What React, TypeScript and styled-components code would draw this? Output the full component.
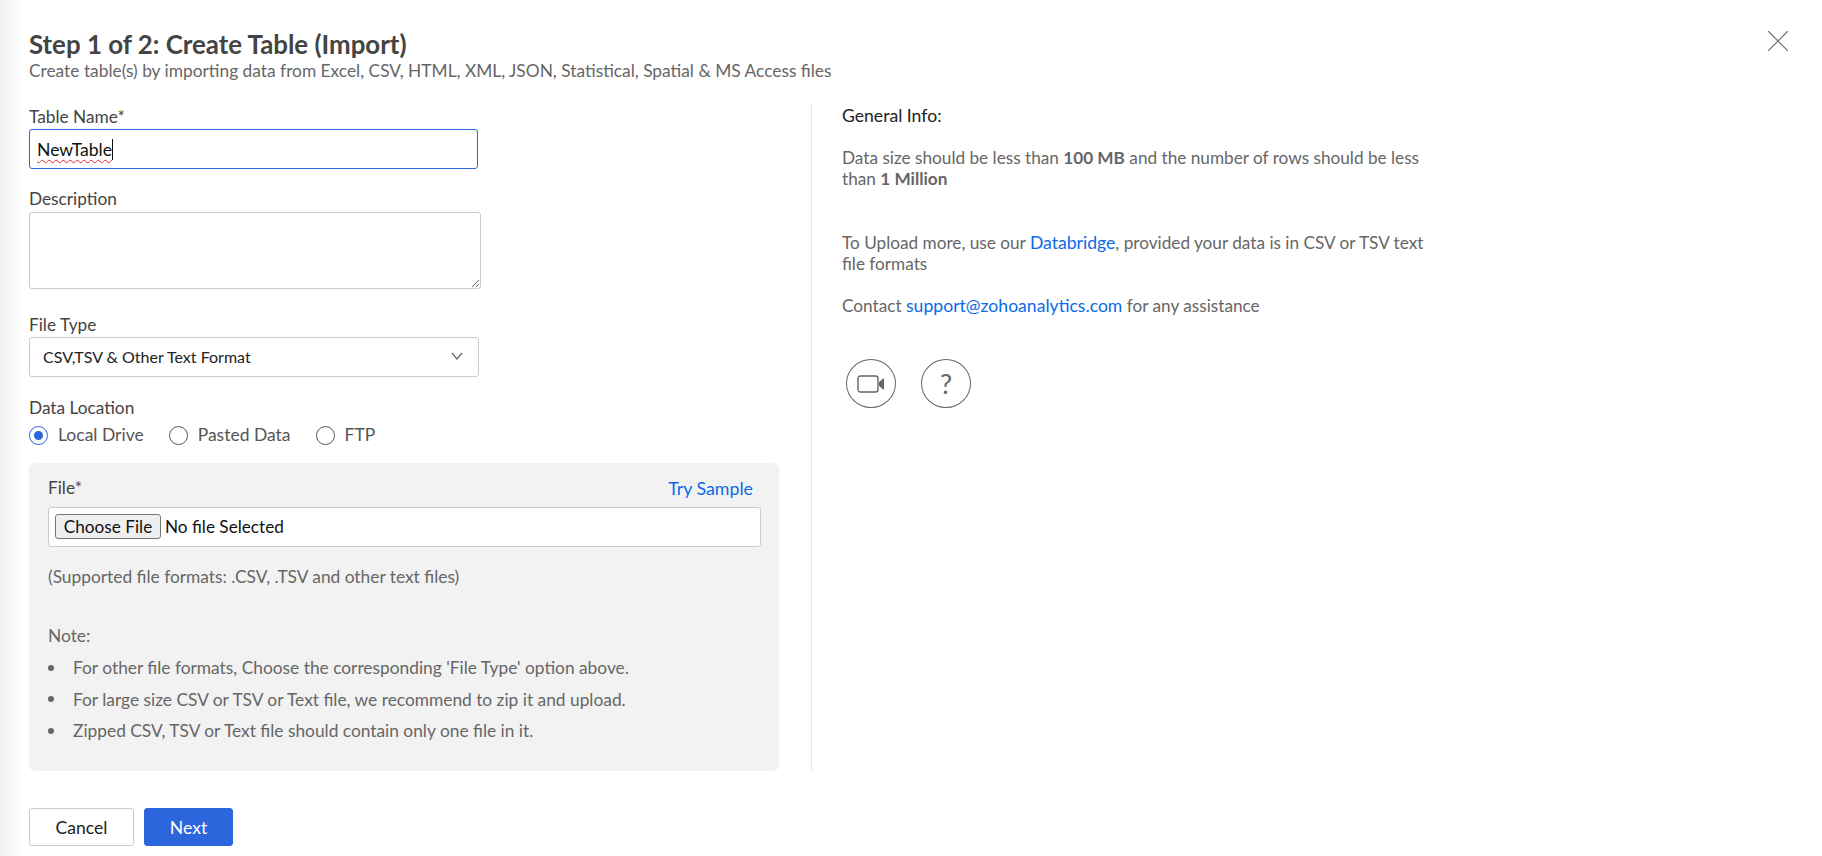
import React from 'react';
import styled, { createGlobalStyle } from 'styled-components';

const GlobalStyle = createGlobalStyle`
  html, body {
    margin: 0;
    padding: 0;
    height: 100%;
    overflow: hidden;
  }
  * { box-sizing: border-box; }
  body {
    font-family: Lato, "Open Sans", sans-serif;
    color: #555;
    background: #fff;
  }
`;

const Page = styled.div`
  position: relative;
  width: 1822px;
  height: 856px;
  padding: 29px 0 0 29px;
  background: linear-gradient(90deg, #f1f1f1 0, #f8f8f8 14px, #fff 24px);
`;

const CloseBtn = styled.button`
  position: absolute;
  top: 31px;
  left: 1768px;
  width: 20px;
  height: 20px;
  padding: 0;
  border: none;
  background: none;
  color: #666;
  svg { display: block; }
`;

const Title = styled.h1`
  margin: 0;
  font-size: 25.85px;
  line-height: 31px;
  font-weight: 700;
  color: #444;
`;

const Subtitle = styled.div`
  font-size: 17.33px;
  line-height: 21px;
  color: #666;
`;

const Columns = styled.div`
  display: flex;
  margin-top: 23px;
`;

const LeftCol = styled.div`
  width: 783px;
  height: 667px;
  padding-top: 3px;
  border-right: 1px solid #e6e6e6;
`;

const RightCol = styled.div`
  width: 626px;
  padding: 2px 0 0 30px;
  font-size: 17.2px;
  line-height: 21px;
  color: #666;
`;

const FieldLabel = styled.label`
  display: block;
  font-size: 17.25px;
  line-height: 20px;
  color: #444;
`;

const Field = styled.div<{ $gap: number }>`
  margin-bottom: ${(p) => p.$gap}px;
`;

const TextBox = styled.div`
  display: flex;
  align-items: center;
  width: 449px;
  height: 40px;
  margin-top: 2px;
  padding: 0 7px;
  border: 1px solid #2c66dd;
  border-radius: 3px;
  background: #fff;
  font-size: 17.6px;
  color: #111;
`;

const Typed = styled.span`
  text-decoration: underline wavy #e02020 1px;
  text-underline-offset: 3px;
  border-right: 1px solid #111;
`;

const Description = styled.textarea`
  display: block;
  width: 452px;
  height: 77px;
  margin-top: 3px;
  border: 1px solid #ccc;
  border-radius: 3px;
  background: #fff;
`;

const SelectBox = styled.div`
  display: flex;
  align-items: center;
  justify-content: space-between;
  width: 450px;
  height: 40px;
  margin-top: 2px;
  padding: 0 15px 2px 13px;
  border: 1px solid #ccc;
  border-radius: 3px;
  font-size: 16px;
  color: #222;
  svg { display: block; color: #666; }
`;

const RadioRow = styled.div`
  display: flex;
  align-items: center;
  gap: 25px;
  margin-top: 5px;
`;

const RadioOption = styled.div`
  display: flex;
  align-items: center;
  gap: 10px;
  font-size: 17.5px;
  line-height: 24px;
  color: #555;
`;

const RadioDot = styled.span<{ $checked?: boolean }>`
  display: flex;
  align-items: center;
  justify-content: center;
  width: 19px;
  height: 19px;
  border-radius: 50%;
  border: 1px solid ${(p) => (p.$checked ? '#2c66dd' : '#555')};
  &::after {
    content: '';
    display: ${(p) => (p.$checked ? 'block' : 'none')};
    width: 9px;
    height: 9px;
    border-radius: 50%;
    background: #2c66dd;
  }
`;

const FilePanel = styled.div`
  width: 750px;
  height: 308px;
  margin-top: 16px;
  padding: 15px 18px 0 19px;
  border-radius: 6px;
  background: #f2f2f2;
`;

const PanelHead = styled.div`
  display: flex;
  justify-content: space-between;
  padding-right: 8px;
  font-size: 17.25px;
  line-height: 20px;
  color: #444;
`;

const Link = styled.a`
  color: #0a6ae8;
  font-size: 17.6px;
  text-decoration: none;
`;

const SampleLink = styled(Link)`
  font-size: 17.8px;
`;

const FileBox = styled.div`
  display: flex;
  align-items: center;
  gap: 4px;
  height: 40px;
  margin-top: 9px;
  padding: 0 6px 1px;
  border: 1px solid #ccc;
  border-radius: 3px;
  background: #fff;
  font-size: 17.2px;
  color: #111;
`;

const ChooseBtn = styled.button`
  width: 106px;
  height: 25px;
  padding: 0;
  border: 1px solid #767676;
  border-radius: 3px;
  background: #efefef;
  font-family: inherit;
  font-size: 17.2px;
  color: #111;
`;

const Hint = styled.div`
  margin-top: 20px;
  font-size: 17.33px;
  line-height: 20px;
  color: #666;
`;

const NoteTitle = styled.div`
  margin-top: 39px;
  font-size: 17.33px;
  line-height: 20px;
  color: #666;
`;

const NoteList = styled.ul`
  margin: 6px 0 0;
  padding: 0;
  list-style: none;
  font-size: 17.33px;
  line-height: 31.5px;
  color: #666;
`;

const NoteItem = styled.li`
  display: flex;
  align-items: center;
  gap: 19px;
  &::before {
    content: '';
    width: 6px;
    height: 6px;
    border-radius: 50%;
    background: #666;
  }
`;

const Footer = styled.div`
  display: flex;
  gap: 10px;
  margin-top: 37px;
`;

const ActionBtn = styled.button<{ $primary?: boolean }>`
  height: 38px;
  width: ${(p) => (p.$primary ? 89 : 105)}px;
  padding: 0;
  border: 1px solid ${(p) => (p.$primary ? '#2c66dd' : '#ccc')};
  border-radius: 3px;
  background: ${(p) => (p.$primary ? '#2c66dd' : '#fff')};
  color: ${(p) => (p.$primary ? '#fff' : '#222')};
  font-family: inherit;
  font-size: 17.6px;
`;

const InfoTitle = styled.div`
  line-height: 20px;
  font-size: 17.6px;
  color: #222;
`;

const InfoText = styled.p<{ $top: number }>`
  margin: ${(p) => p.$top}px 0 0;
`;

const InfoIcons = styled.div`
  display: flex;
  gap: 25px;
  margin-top: 43px;
  padding-left: 4px;
`;

const RoundIcon = styled.button`
  display: flex;
  align-items: center;
  justify-content: center;
  width: 50px;
  height: 49px;
  padding: 0;
  border: 1px solid #666;
  border-radius: 50%;
  background: #fff;
  color: #666;
  font-family: inherit;
  font-size: 27px;
`;

const App = () => (
  <Page>
    <GlobalStyle />
    <CloseBtn aria-label="Close">
      <svg width="20" height="20" viewBox="0 0 20 20" fill="none" stroke="currentColor" strokeWidth="1.2">
        <path d="M0 0 L20 20 M20 0 L0 20" />
      </svg>
    </CloseBtn>

    <Title>Step 1 of 2: Create Table (Import)</Title>
    <Subtitle>Create table(s) by importing data from Excel, CSV, HTML, XML, JSON, Statistical, Spatial &amp; MS Access files</Subtitle>

    <Columns>
      <LeftCol>
        <Field $gap={20}>
          <FieldLabel>Table Name*</FieldLabel>
          <TextBox><Typed>NewTable</Typed></TextBox>
        </Field>
        <Field $gap={26}>
          <FieldLabel>Description</FieldLabel>
          <Description />
        </Field>
        <Field $gap={21}>
          <FieldLabel>File Type</FieldLabel>
          <SelectBox>
            CSV,TSV &amp; Other Text Format
            <svg width="12" height="8" viewBox="0 0 12 8" fill="none" stroke="currentColor" strokeWidth="1.2">
              <path d="M1 1 L6 7 L11 1" />
            </svg>
          </SelectBox>
        </Field>
        <FieldLabel>Data Location</FieldLabel>
        <RadioRow>
          <RadioOption><RadioDot $checked />Local Drive</RadioOption>
          <RadioOption><RadioDot />Pasted Data</RadioOption>
          <RadioOption><RadioDot />FTP</RadioOption>
        </RadioRow>

        <FilePanel>
          <PanelHead>
            <span>File*</span>
            <SampleLink>Try Sample</SampleLink>
          </PanelHead>
          <FileBox>
            <ChooseBtn>Choose File</ChooseBtn>
            No file Selected
          </FileBox>
          <Hint>(Supported file formats: .CSV, .TSV and other text files)</Hint>
          <NoteTitle>Note:</NoteTitle>
          <NoteList>
            <NoteItem>For other file formats, Choose the corresponding 'File Type' option above.</NoteItem>
            <NoteItem>For large size CSV or TSV or Text file, we recommend to zip it and upload.</NoteItem>
            <NoteItem>Zipped CSV, TSV or Text file should contain only one file in it.</NoteItem>
          </NoteList>
        </FilePanel>
      </LeftCol>

      <RightCol>
        <InfoTitle>General Info:</InfoTitle>
        <InfoText $top={21}>
          Data size should be less than <b>100 MB</b> and the number of rows should be less than <b>1 Million</b>
        </InfoText>
        <InfoText $top={43}>
          To Upload more, use our <Link>Databridge</Link>, provided your data is in CSV or TSV text file formats
        </InfoText>
        <InfoText $top={21}>
          Contact <Link>support@zohoanalytics.com</Link> for any assistance
        </InfoText>
        <InfoIcons>
          <RoundIcon aria-label="Video">
            <svg width="28" height="18" viewBox="0 0 28 18" fill="none">
              <rect x="1" y="1" width="20" height="16" rx="2.5" stroke="currentColor" strokeWidth="1.4" />
              <path d="M22 7 L27 3 V15 L22 11 Z" fill="currentColor" />
            </svg>
          </RoundIcon>
          <RoundIcon>?</RoundIcon>
        </InfoIcons>
      </RightCol>
    </Columns>

    <Footer>
      <ActionBtn>Cancel</ActionBtn>
      <ActionBtn $primary>Next</ActionBtn>
    </Footer>
  </Page>
);

export default App;
